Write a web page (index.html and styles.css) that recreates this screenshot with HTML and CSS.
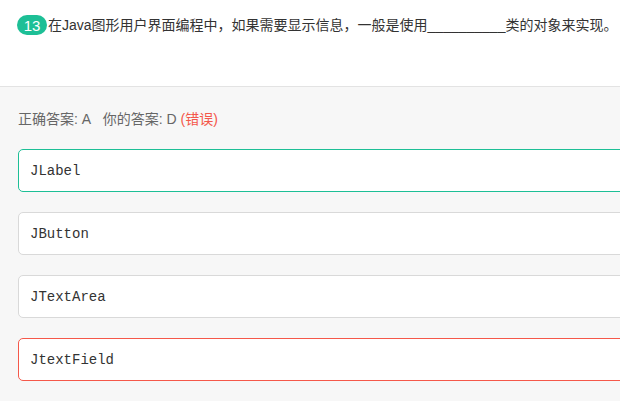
FILE: index.html
```html
<!DOCTYPE html>
<html lang="zh-CN">
<head>
<meta charset="utf-8">
<title>Quiz</title>
<link rel="stylesheet" href="styles.css">
</head>
<body>
  <div class="question">
    <span class="badge">13</span><span class="qtext">在Java图形用户界面编程中，如果需要显示信息，一般是使用__________类的对象来实现。</span>
  </div>
  <div class="answers">
    <div class="result">正确答案: A&nbsp;&nbsp; 你的答案: D <span class="wrong">(错误)</span></div>
    <div class="option correct">JLabel</div>
    <div class="option">JButton</div>
    <div class="option">JTextArea</div>
    <div class="option chosen-wrong">JtextField</div>
  </div>
</body>
</html>
```

FILE: styles.css
```css
html, body {
  margin: 0;
  padding: 0;
  overflow: hidden;
  background: #f7f7f7;
  font-family: "Liberation Sans", "Noto Sans CJK SC", sans-serif;
}

.question {
  background: #ffffff;
  height: 87px;
  box-sizing: border-box;
  padding: 15px 0 0 17px;
  border-bottom: 1px solid #e3e3e3;
  display: flex;
  align-items: flex-start;
}

.badge {
  display: inline-flex;
  align-items: center;
  justify-content: center;
  width: 30px;
  height: 20px;
  border-radius: 10px;
  background: #1dbf96;
  color: #ffffff;
  font-size: 15px;
  flex-shrink: 0;
}

.qtext {
  font-size: 14px;
  line-height: 20px;
  color: #333333;
  margin-left: 1px;
  white-space: nowrap;
}

.answers {
  padding: 22px 0 0 18px;
}

.result {
  font-size: 14px;
  line-height: 20px;
  color: #666666;
  margin-bottom: 20px;
}

.wrong {
  color: #f4574a;
}

.option {
  height: 43px;
  box-sizing: border-box;
  margin-right: -12px;
  margin-bottom: 20px;
  border: 1px solid #d9d9d9;
  border-radius: 5px;
  background: #ffffff;
  display: flex;
  align-items: center;
  padding-left: 11px;
  font-family: "Liberation Mono", monospace;
  font-size: 14px;
  color: #333333;
}

.option.correct {
  border-color: #1dbf96;
}

.option.chosen-wrong {
  border-color: #f5584a;
}
```
